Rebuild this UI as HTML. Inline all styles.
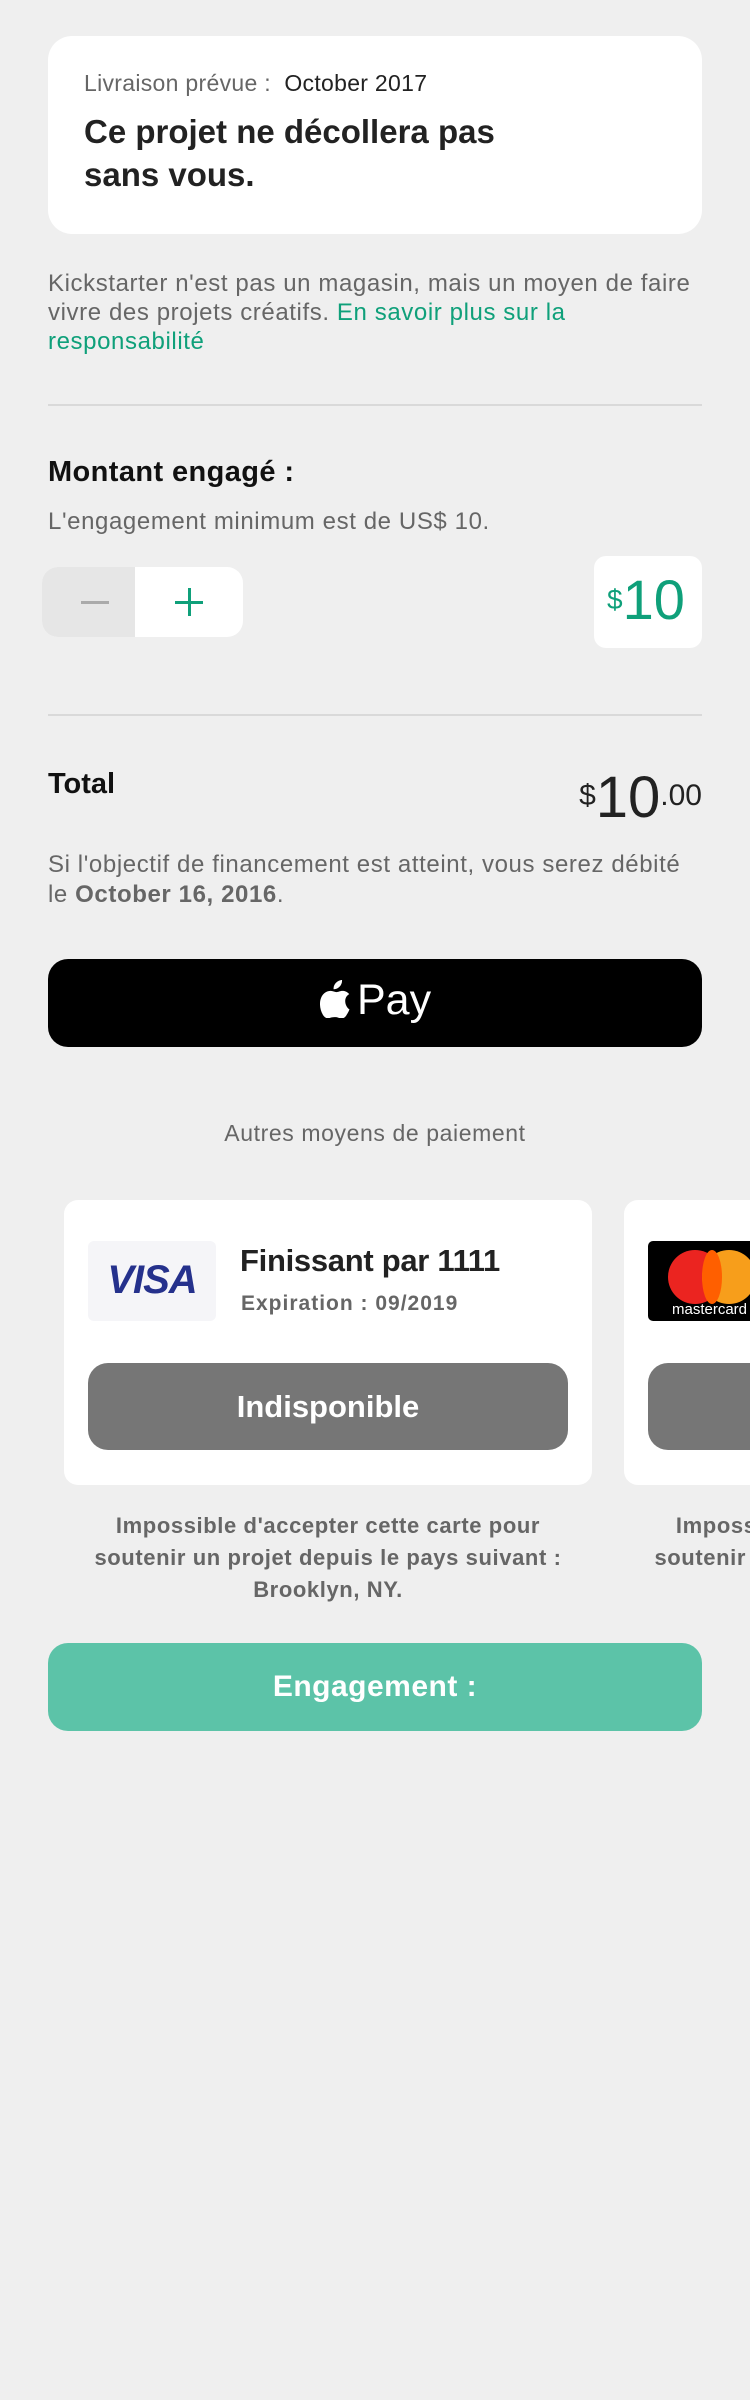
<!DOCTYPE html>
<html><head><meta charset="utf-8">
<style>
*{margin:0;padding:0;box-sizing:border-box}
html,body{width:750px;height:2400px;overflow:hidden}
body{background:#efefef;font-family:"Liberation Sans",sans-serif;position:relative;color:#222}
.a{position:absolute;white-space:nowrap}
.card{position:absolute;background:#fff}
.g{font-size:24px;letter-spacing:0.6px;color:#666}
</style></head><body>
<div class="card" style="left:48px;top:36px;width:654px;height:198px;border-radius:24px"></div>
<div class="a" style="left:84px;top:70px;font-size:23px;color:#666;letter-spacing:0.3px">Livraison prévue :&nbsp; <span style="color:#222">October 2017</span></div>
<div class="a" style="left:84px;top:110px;font-size:33px;font-weight:bold;line-height:43px;color:#222">Ce projet ne décollera pas<br>sans vous.</div>

<div class="a g" style="left:48px;top:269px;line-height:29px">Kickstarter n'est pas un magasin, mais un moyen de faire<br>vivre des projets créatifs. <span style="color:#0fa07a">En savoir plus sur la</span><br><span style="color:#0fa07a">responsabilité</span></div>

<div class="a" style="left:48px;top:404px;width:654px;height:2px;background:#d9d9d9"></div>

<div class="a" style="left:48px;top:456px;font-size:29px;font-weight:bold;color:#111;letter-spacing:0.4px">Montant engagé :</div>
<div class="a g" style="left:48px;top:508px">L'engagement minimum est de US$ 10.</div>

<div class="a" style="left:42px;top:567px;width:201px;height:70px;border-radius:16px;background:#fff;overflow:hidden">
  <div style="position:absolute;left:0;top:0;width:93px;height:70px;background:#e6e6e6"></div>
  <div style="position:absolute;left:39px;top:34px;width:28px;height:3px;background:#aaa"></div>
  <div style="position:absolute;left:133px;top:34px;width:28px;height:3px;background:#0fa07a"></div>
  <div style="position:absolute;left:146px;top:21px;width:3px;height:28px;background:#0fa07a"></div>
</div>
<div class="card" style="left:594px;top:556px;width:108px;height:92px;border-radius:12px"></div>
<div class="a" style="left:607px;top:568px;color:#0fa07a;font-size:56px;line-height:64px"><span style="font-size:28px;vertical-align:top;position:relative;top:0px">$</span>10</div>

<div class="a" style="left:48px;top:714px;width:654px;height:2px;background:#d9d9d9"></div>

<div class="a" style="left:48px;top:768px;font-size:29px;font-weight:bold;color:#111">Total</div>
<div class="a" style="right:48px;top:766px;font-size:58px;line-height:64px;color:#222"><span style="font-size:30px;vertical-align:top;position:relative;top:-2px">$</span>10<span style="font-size:30px;vertical-align:top;position:relative;top:-2px">.00</span></div>

<div class="a g" style="left:48px;top:850px;line-height:30px">Si l'objectif de financement est atteint, vous serez débité<br>le <b>October 16, 2016</b>.</div>

<div class="a" style="left:48px;top:959px;width:654px;height:88px;border-radius:20px;background:#000"></div>
<svg class="a" style="left:320px;top:980px" width="32" height="38" viewBox="0 0 32 38"><path fill="#fff" d="M22 0c.3 2.5-.8 5-2.4 6.6-1.5 1.6-3.7 2.8-6 2.6-.3-2.4.9-4.9 2.4-6.4C17.6 1.2 20 0 22 0zM29.5 29.5c-1.2 2.6-1.8 3.8-3.3 6.1-2.1 3.2-5.1 3.3-6.8 2.5-1.8-.8-2.7-1-5-1s-3.3.4-5 1c-2 .8-4.5-.2-6.4-3.1C-1.8 27 -.5 17 4.3 13.2c2-1.6 4.5-2.3 6.4-2.3 2.3 0 3.9 1.2 5.8 1.2s3.3-1.2 6.1-1.2c2 0 4.7.8 6.6 3.2-5.8 3.2-4.9 11.6.3 15.4z"/></svg>
<div class="a" style="left:357px;top:972px;font-size:43px;color:#fff;line-height:56px">Pay</div>

<div class="a" style="left:0;width:750px;text-align:center;top:1120px;font-size:23px;letter-spacing:0.6px;color:#666">Autres moyens de paiement</div>

<div class="card" style="left:64px;top:1200px;width:528px;height:285px;border-radius:14px"></div>
<div class="a" style="left:88px;top:1241px;width:128px;height:80px;border-radius:6px;background:#f5f5f8"></div>
<div class="a" style="left:98px;top:1258px;width:108px;text-align:center;font-size:40px;font-weight:bold;font-style:italic;color:#25318c;letter-spacing:-1px">VISA</div>
<div class="a" style="left:240px;top:1243px;font-size:31px;font-weight:bold;color:#222;letter-spacing:-0.3px">Finissant par 1111</div>
<div class="a" style="left:241px;top:1292px;font-size:21px;font-weight:bold;color:#666;letter-spacing:1px">Expiration : 09/2019</div>
<div class="a" style="left:88px;top:1363px;width:480px;height:87px;border-radius:20px;background:#767676;color:#fff;font-size:31px;font-weight:bold;text-align:center;line-height:87px">Indisponible</div>
<div class="a" style="left:64px;width:528px;text-align:center;top:1510px;font-size:22px;font-weight:bold;line-height:32px;color:#666;letter-spacing:0.6px">Impossible d'accepter cette carte pour<br>soutenir un projet depuis le pays suivant :<br>Brooklyn, NY.</div>

<div class="card" style="left:624px;top:1200px;width:528px;height:285px;border-radius:14px"></div>
<div class="a" style="left:648px;top:1241px;width:128px;height:80px;border-radius:5px;background:#000;overflow:hidden">
  <div style="position:absolute;left:20px;top:9px;width:54px;height:54px;border-radius:50%;background:#eb2420"></div>
  <div style="position:absolute;left:54px;top:9px;width:54px;height:54px;border-radius:50%;background:#f79e1b"></div>
  <div style="position:absolute;left:54px;top:9px;width:20px;height:54px;background:#ff5f00;border-radius:50%/50%"></div>
  <div style="position:absolute;left:24px;top:60px;font-size:15px;color:#fff">mastercard</div>
</div>
<div class="a" style="left:648px;top:1363px;width:480px;height:87px;border-radius:20px;background:#767676"></div>
<div class="a" style="left:624px;width:528px;text-align:center;top:1510px;font-size:22px;font-weight:bold;line-height:32px;color:#666;letter-spacing:0.6px">Impossible d'accepter cette carte pour<br>soutenir un projet depuis le pays suivant :</div>

<div class="a" style="left:48px;top:1643px;width:654px;height:88px;border-radius:20px;background:#5cc3a8;color:#fff;font-size:30px;font-weight:bold;text-align:center;line-height:88px;letter-spacing:0.5px">Engagement :</div>
</body></html>
